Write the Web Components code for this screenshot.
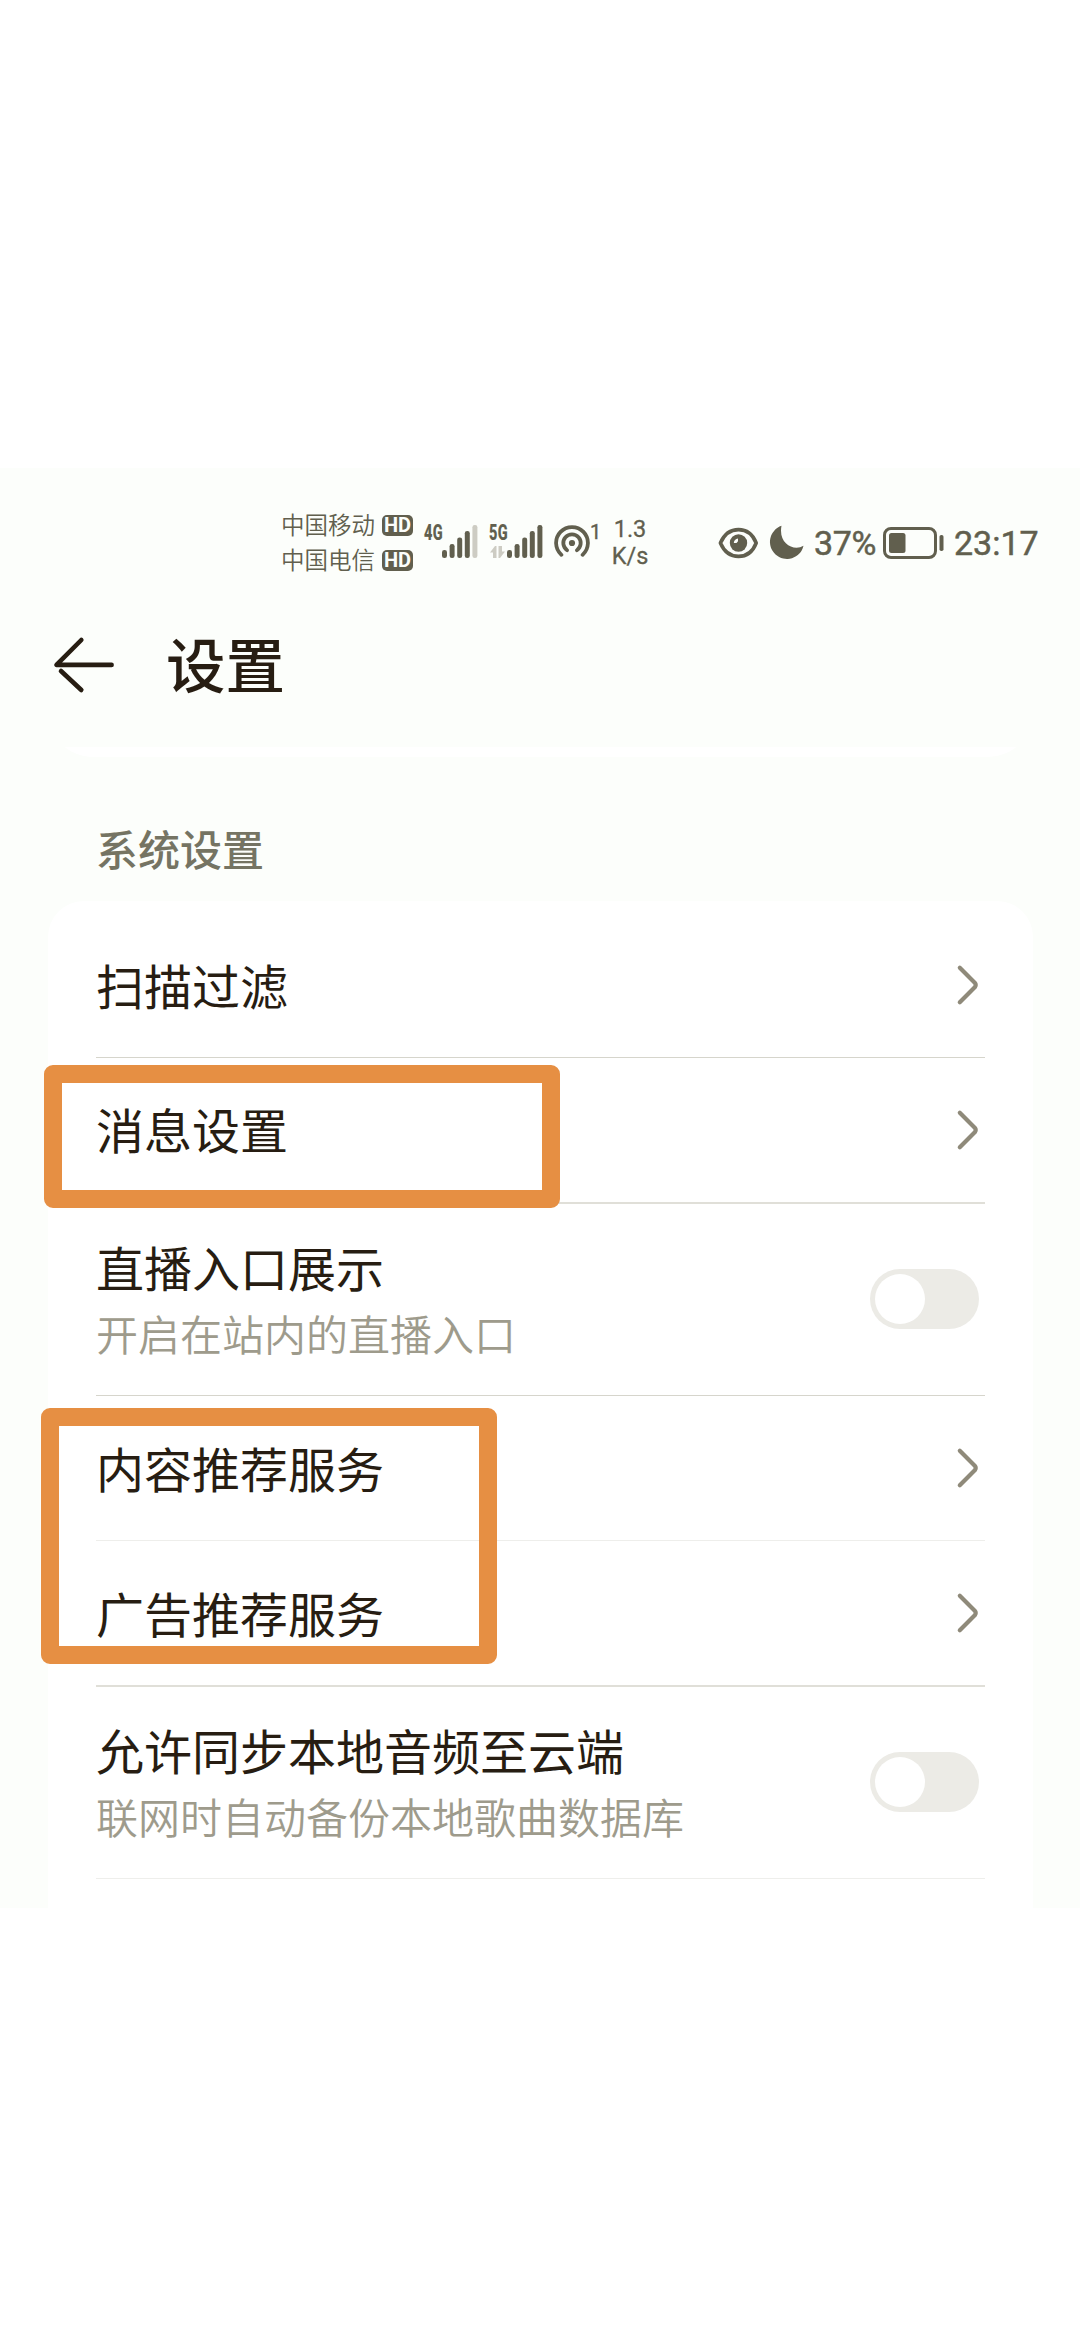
<!DOCTYPE html>
<html lang="zh-CN">
<head>
<meta charset="utf-8">
<title>设置</title>
<style>
  html, body { margin: 0; background: #fff; }
  body { font-family: "Noto Sans CJK SC", sans-serif; color: #271d12; }
</style>
</head>
<body>
<settings-screen>
  <status-bar></status-bar>
  <app-bar>设置</app-bar>
  <settings-section heading="系统设置">
    <settings-row kind="link">扫描过滤</settings-row>
    <settings-row kind="link" line="thick">消息设置</settings-row>
    <settings-row kind="toggle">直播入口展示<span slot="note">开启在站内的直播入口</span></settings-row>
    <settings-row kind="link" line="soft">内容推荐服务</settings-row>
    <settings-row kind="link" line="thick">广告推荐服务</settings-row>
    <settings-row kind="toggle" line="soft">允许同步本地音频至云端<span slot="note">联网时自动备份本地歌曲数据库</span></settings-row>
  </settings-section>
  <highlight-box slot="marks" style="left:44px;top:597px;width:516px;height:143px"></highlight-box>
  <highlight-box slot="marks" style="left:41px;top:940px;width:456px;height:256px"></highlight-box>
</settings-screen>
<script>
const define = (name, markup) => customElements.define(name, class extends HTMLElement {
  constructor() {
    super();
    this.attachShadow({ mode: 'open' }).innerHTML = typeof markup === 'function' ? markup(this) : markup;
  }
});

define('settings-screen', `
<style>
  :host { display: block; padding: 468px 0 438px; }
  main { position: relative; display: flex; flex-direction: column; height: 1440px; overflow: hidden; background: #fcfefb; }
  ::slotted(*) { flex-shrink: 0; }
</style>
<main><slot></slot><slot name="marks"></slot></main>`);

define('highlight-box', `
<style>
  :host { display: block; position: absolute; box-sizing: border-box; border: 18px solid #e68f43; border-radius: 9px; }
</style>`);

define('hd-badge', `
<style>
  :host { display: flex; width: 31px; height: 21px; border-radius: 5px; background: #615f4e; color: #fcfefb;
    font: 700 20px/21px Roboto, sans-serif; justify-content: center; }
</style>HD`);

define('signal-bars', el => {
  const tops = [25, 19, 12.5, 6, 0];
  const lit = +el.getAttribute('lit');
  const bars = tops.map((t, i) =>
    `<rect x="${i * 7.6}" y="${t}" width="5" height="${33 - t}" rx="2.3" fill="${i < lit ? '#615f4e' : '#cdccc3'}"/>`).join('');
  const data = el.hasAttribute('data') ?
    `<svg class="d" width="15" height="12" viewBox="0 0 15 12"><path d="M5 0L0 6.500H3V12H6.500V0ZM8.500 0H12V5.500H15L10 12H8.500Z" fill="#cdccc3"/></svg>` : '';
  return `
<style>
  :host { display: flex; height: 34px; }
  .net { display: flex; flex-direction: column; width: 18px; }
  b { font: 800 22px/16px Roboto, sans-serif; transform: scaleX(.66); transform-origin: 0 0; width: 18px; letter-spacing: .5px; -webkit-text-stroke: .2px; }
  .d { margin: 5px 0 0 1px; }
</style>
<div class="net"><b><slot></slot></b>${data}</div><svg width="36" height="34" viewBox="0 0 36 34">${bars}</svg>`;
});

define('status-bar', `
<style>
  :host { display: flex; align-items: center; height: 150px; padding-left: 281px; color: #615f4e; box-sizing: border-box; font-family: Roboto, sans-serif; }
  .carriers { display: flex; flex-direction: column; width: 143px; }
  .carriers div { display: flex; align-items: center; height: 35.5px; gap: 7px; }
  .carriers span { font: 350 23.500px/32px "Noto Sans CJK SC", sans-serif; width: 94px; white-space: nowrap; margin-top: -3px; }
  svg { display: block; flex: none; }
  .one { font-size: 20px; line-height: 20px; margin: -22px 0 0 0; width: 22px; -webkit-text-stroke: .4px; }
  .speed { display: flex; flex-direction: column; font-size: 23.500px; line-height: 26.500px; width: 36px; margin: -1px 1px 0 0; text-align: center; align-items: center; -webkit-text-stroke: .3px; }
  .big { font-size: 34px; line-height: 40px; font-weight: 400; -webkit-text-stroke: .5px; }
</style>
<div class="carriers">
  <div><span>中国移动</span><hd-badge></hd-badge></div>
  <div><span>中国电信</span><hd-badge></hd-badge></div>
</div>
<signal-bars lit="4" style="margin-top:-2px">4G</signal-bars>
<signal-bars lit="5" data style="margin:-2px 0 0 11px">5G</signal-bars>
<svg style="margin-left:11px" width="36" height="36" viewBox="-18 -18 36 36" fill="none" stroke="#615f4e" stroke-width="3.8" stroke-linecap="round">
  <circle r="3.1" fill="#615f4e" stroke="none"/>
  <path d="M-4.9 7.2A8.7 8.7 0 1 1 4.9 7.2"/>
  <path d="M-10.6 11.8A15.9 15.9 0 1 1 10.6 11.8"/>
</svg>
<div class="one">1</div>
<div class="speed"><span>1.3</span><span>K/s</span></div>
<svg style="margin-left:69px" width="41" height="32" viewBox="0 0 41 32">
  <path d="M2.400 16C6.500 6.500 13 2.600 20.500 2.600S34.500 6.500 38.200 16C34.500 25.500 28 29.400 20.500 29.400S6.500 25.500 2.400 16Z" fill="none" stroke="#615f4e" stroke-width="3.600" stroke-linejoin="round"/>
  <circle cx="20.500" cy="16" r="8.700" fill="#615f4e"/>
  <path d="M15.800 16A5 5 0 0 1 20 11.400V14.200L18.500 16Z" fill="#fcfefb"/>
</svg>
<svg style="margin:-2px 0 0 10px" width="36" height="34" viewBox="0 0 36 34">
  <path d="M12.500 .8A17 17 0 1 0 34.500 20.800C25 26.500 9 19 12.500 .8Z" fill="#615f4e"/>
</svg>
<span class="big" style="margin-left:9px;width:69px;letter-spacing:-.3px">37%</span>
<svg style="margin-top:-1px" width="61" height="32" viewBox="0 0 61 32">
  <rect x="1.500" y="1.500" width="51" height="29" rx="6.500" fill="none" stroke="#615f4e" stroke-width="3"/>
  <rect x="6" y="6" width="16.500" height="20" rx="2.500" fill="#615f4e"/>
  <rect x="56.500" y="8" width="4" height="16" rx="1.800" fill="#615f4e"/>
</svg>
<span class="big" style="margin-left:10px">23:17</span>`);

define('app-bar', `
<style>
  :host { display: flex; align-items: center; height: 93px; padding-left: 52px; }
  h1 { margin: -5px 0 0 50px; font: 500 59.500px/80px "Noto Sans CJK SC", sans-serif; }
</style>
<svg width="64" height="60" viewBox="52 634.500 64 60" fill="none" stroke="#271d12" stroke-width="4.600" stroke-linecap="round">
  <path d="M81.300 639.500L56.500 664.400H111.600M61 670.500L81.300 689.500" stroke-linejoin="round"/>
</svg>
<h1><slot></slot></h1>`);

define('settings-section', el => `
<style>
  :host { display: block; padding: 0 47px 0 48px; }
  .prev { height: 46px; clip-path: inset(36px 0 0 0); background: #fff; border-radius: 0 0 45px 45px; }
  h2 { margin: 0; height: 144px; padding: 60px 0 0 48px; box-sizing: border-box; font: 500 42px/62px "Noto Sans CJK SC", sans-serif; color: #757463; }
  .card { background: #fff; border-radius: 36px 36px 0 0; padding: 12px 48px 60px; }
</style>
<div class="prev"></div>
<h2>${el.getAttribute('heading')}</h2>
<div class="card"><slot></slot></div>`);

define('toggle-switch', `
<style>
  :host { display: block; width: 109px; height: 60px; box-sizing: border-box; padding: 5px; border-radius: 30px; background: #ecebe6; margin: -1px 1px 0 0; }
  i { display: block; width: 50px; height: 50px; border-radius: 50%; background: #fff; }
</style><i></i>`);

define('settings-row', el => {
  const toggle = el.getAttribute('kind') === 'toggle';
  const line = { thick: '2px solid #e0dfd8', soft: '1px solid #eeeeeb' }[el.getAttribute('line')] || '1px solid #d6d5cc';
  return `
<style>
  :host { display: flex; align-items: center; justify-content: space-between; box-sizing: border-box;
    height: ${toggle ? 192.5 : 145.3}px; border-bottom: ${line}; padding-right: 5px; }
  .text { display: flex; flex-direction: column; white-space: nowrap; }
  .t { font-size: 48px; line-height: 68px; ${toggle ? '' : 'margin-top: -3px;'} }
  .n { font-size: 42px; line-height: 66px; color: #9e9b8c; font-weight: 350; }
</style>
<div class="text"><div class="t"><slot></slot></div>${toggle ? '<div class="n"><slot name="note"></slot></div>' : ''}</div>
${toggle ? '<toggle-switch></toggle-switch>' :
'<svg width="24" height="42" viewBox="0 0 24 42" fill="none" stroke="#8f8a7a" stroke-width="4.200" stroke-linecap="round" stroke-linejoin="round"><path d="M3.800 3.700L19 19Q20.400 21 19 23L3.800 38.300"/></svg>'}`;
});
</script>
</body>
</html>
